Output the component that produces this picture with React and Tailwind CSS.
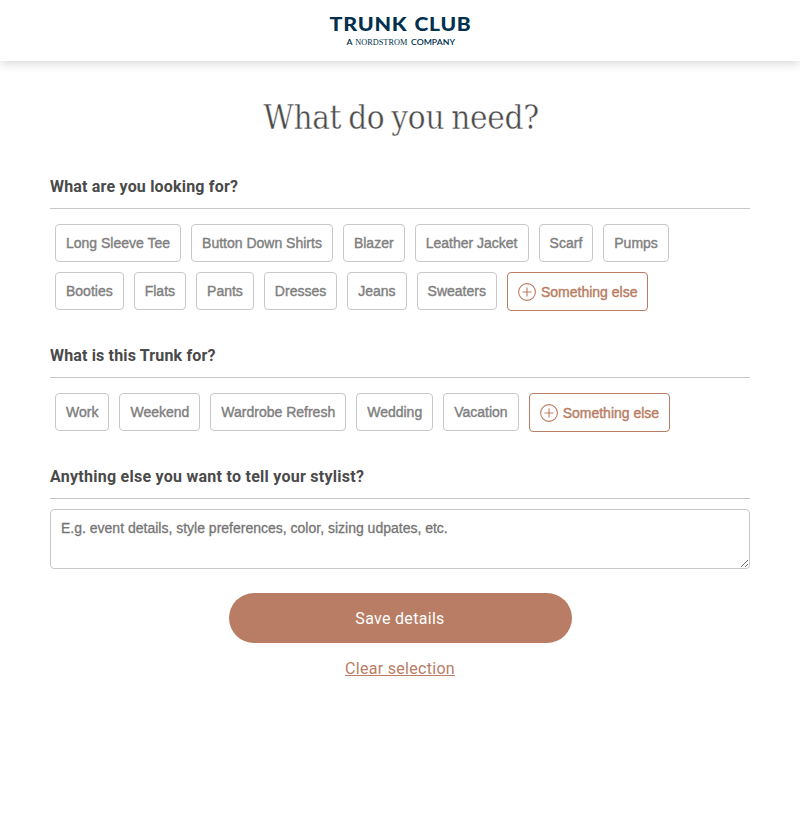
const items = ['Long Sleeve Tee', 'Button Down Shirts', 'Blazer', 'Leather Jacket', 'Scarf', 'Pumps', 'Booties', 'Flats', 'Pants', 'Dresses', 'Jeans', 'Sweaters'];
const occasions = ['Work', 'Weekend', 'Wardrobe Refresh', 'Wedding', 'Vacation'];

function Logo() {
  return (
    <svg width="160" height="54" viewBox="0 0 160 54" className="mt-[4px]" fill="#00304d" role="img">
      <text x="9.5" y="26.8" fontFamily="Lato, sans-serif" fontWeight="900" fontSize="19.5" letterSpacing="0.7" textLength="78" lengthAdjust="spacingAndGlyphs">TRUNK</text>
      <text x="94.5" y="26.8" fontFamily="Lato, sans-serif" fontWeight="900" fontSize="19.5" letterSpacing="0.7" textLength="57" lengthAdjust="spacingAndGlyphs">CLUB</text>
      <text x="26.5" y="41" fontFamily="Lato, sans-serif" fontWeight="600" fontSize="8.3" textLength="6" lengthAdjust="spacingAndGlyphs">A</text>
      <text x="35.3" y="41" fontFamily="'Liberation Serif', serif" fontSize="9" textLength="52" lengthAdjust="spacingAndGlyphs">NORDSTROM</text>
      <text x="91" y="41" fontFamily="Lato, sans-serif" fontWeight="600" fontSize="8.3" textLength="44" lengthAdjust="spacingAndGlyphs">COMPANY</text>
    </svg>
  );
}

function Chip({ label, width = '' }) {
  return (
    <button className={`h-[38px] rounded-[4px] border border-[#c8c8c8] px-[10px] font-['Liberation_Sans',Arial,sans-serif] text-[14px] leading-[20px] text-[#808080] [-webkit-text-stroke:0.4px_#808080] ${width}`}>
      {label}
    </button>
  );
}

function SomethingElse() {
  return (
    <button className="flex h-[39px] items-center gap-[5px] rounded-[4px] border border-[#b87d64] px-[10px] font-['Liberation_Sans',Arial,sans-serif] text-[14px] leading-[20px] text-[#b87d64] [-webkit-text-stroke:0.4px_#b87d64]">
      <svg width="18" height="18" viewBox="0 0 18 18" fill="none" stroke="#b87d64">
        <circle cx="9" cy="9" r="8.4" strokeWidth="1.1" />
        <path d="M9 4.5v9M4.5 9h9" strokeWidth="1.1" />
      </svg>
      <span>Something else</span>
    </button>
  );
}

function Section({ title, className, spacing, children }) {
  return (
    <section className={className}>
      <h2 className={`flex h-[32px] items-start border-b border-[#c8c8c8] font-[Roboto,sans-serif] text-[16px] leading-[20px] font-bold text-[#4a4a4a] ${spacing}`}>
        <span>{title}</span>
      </h2>
      {children}
    </section>
  );
}

export default function App() {
  return (
    <div className="h-[814px] overflow-hidden bg-white">
      <header className="flex h-[61px] justify-center bg-white shadow-[0_2px_10px_rgba(0,0,0,0.17)]">
        <Logo />
      </header>
      <main className="mx-auto w-[700px]">
        <h1 className="mt-[36px] pl-[2px] text-center font-['DejaVu_Serif_Condensed','DejaVu_Serif',serif] text-[33px] leading-[42px] tracking-[-0.3px] text-[#4a4a4a] [-webkit-text-stroke:0.4px_white] [font-stretch:condensed] [word-spacing:-2.2px]">
          What do you need?
        </h1>
        <Section title="What are you looking for?" className="mt-[38px]" spacing="tracking-[0.19px]">
          <div className="flex flex-wrap items-start gap-[10px] px-[5px] pt-[15px]">
            {items.map((label) => <Chip key={label} label={label} width={label === 'Leather Jacket' ? 'w-[114px]' : ''} />)}
            <SomethingElse />
          </div>
        </Section>
        <Section title="What is this Trunk for?" className="mt-[35px]" spacing="tracking-[0.16px]">
          <div className="flex flex-wrap items-start gap-[10px] px-[5px] pt-[15px]">
            {occasions.map((label) => <Chip key={label} label={label} />)}
            <SomethingElse />
          </div>
        </Section>
        <Section title="Anything else you want to tell your stylist?" className="mt-[35px]" spacing="tracking-[0.26px]">
          <textarea
            placeholder="E.g. event details, style preferences, color, sizing udpates, etc."
            className="mt-[10px] block h-[60px] w-full rounded-[4px] border border-[#c8c8c8] px-[10px] py-[8px] font-['Liberation_Sans',Arial,sans-serif] text-[14px] leading-[20px] placeholder:text-[#757575] [-webkit-text-stroke:0.3px_#757575]"
          />
        </Section>
        <div className="mt-[24px] flex flex-col items-center font-[Roboto,sans-serif] text-[16px]">
          <button className="h-[50px] w-[343px] rounded-full bg-[#b87d64] pt-[2px] tracking-[0.3px] text-white">Save details</button>
          <button className="mt-[14px] leading-[24px] tracking-[0.3px] text-[#b87d64] underline">Clear selection</button>
        </div>
      </main>
    </div>
  );
}
